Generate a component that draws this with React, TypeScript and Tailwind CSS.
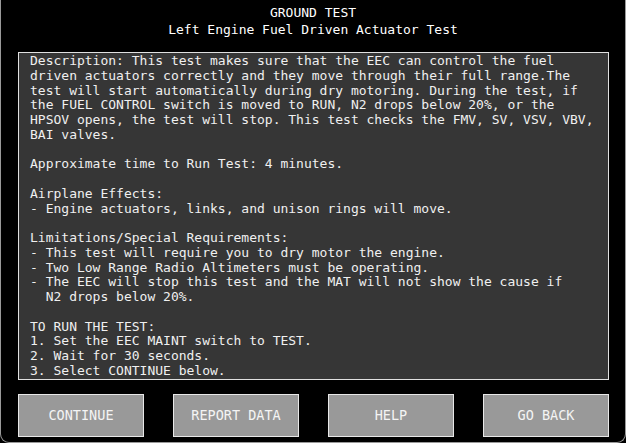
const lines = [
	'Description: This test makes sure that the EEC can control the fuel',
	'driven actuators correctly and they move through their full range.The',
	'test will start automatically during dry motoring. During the test, if',
	'the FUEL CONTROL switch is moved to RUN, N2 drops below 20%, or the',
	'HPSOV opens, the test will stop. This test checks the FMV, SV, VSV, VBV,',
	'BAI valves.',
	'',
	'Approximate time to Run Test: 4 minutes.',
	'',
	'Airplane Effects:',
	'- Engine actuators, links, and unison rings will move.',
	'',
	'Limitations/Special Requirements:',
	'- This test will require you to dry motor the engine.',
	'- Two Low Range Radio Altimeters must be operating.',
	'- The EEC will stop this test and the MAT will not show the cause if',
	'  N2 drops below 20%.',
	'',
	'TO RUN THE TEST:',
	'1. Set the EEC MAINT switch to TEST.',
	'2. Wait for 30 seconds.',
	'3. Select CONTINUE below.',
]

const buttons = ['CONTINUE', 'REPORT DATA', 'HELP', 'GO BACK']

const App = () => {
	return (
		<div className="w-[626px] h-[443px] bg-black overflow-hidden font-['DejaVu_Sans_Mono',monospace]">
			<div className="h-full border-x border-b border-[#9a9a9a] rounded-b-[9px] flex flex-col">
				<header className="pt-[4px] text-center text-[13px] leading-[17px] text-white">
					<p>GROUND TEST</p>
					<p>Left Engine Fuel Driven Actuator Test</p>
				</header>
				<div className="pl-[17px] pr-[16px] pt-[14px]">
					<section className="h-[328px] border border-[#e0e0e0] bg-[#363636] pl-[11px] pt-[1px]">
						{lines.map((line, i) => (
							<p key={i} className="whitespace-pre text-[13px] leading-[14.75px] text-[#f0f0f0] h-[14.75px]">
								{line}
							</p>
						))}
					</section>
					<div className="flex justify-between mt-[14px]">
						{buttons.map((b) => (
							<button
								key={b}
								type="button"
								className="w-[126px] h-[43px] border border-[#e8e8e8] bg-[#999999] text-[#f4f4f4] text-[13.5px] font-['DejaVu_Sans_Mono',monospace]"
							>
								{b}
							</button>
						))}
					</div>
				</div>
			</div>
		</div>
	)
}
export default App
